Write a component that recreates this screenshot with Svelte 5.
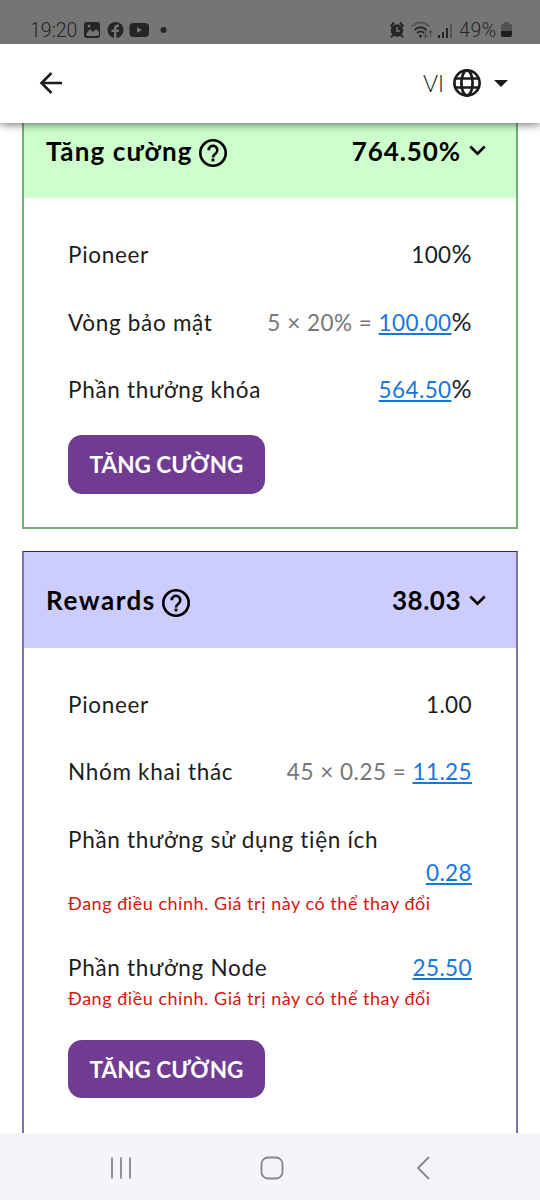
<script>
  const cards = [
    {
      kind: "boost",
      title: "Tăng cường",
      total: "764.50%",
      rows: [
        { label: "Pioneer", plain: "100", unit: "%" },
        { label: "Vòng bảo mật", formula: "5 × 20% =", link: "100.00", unit: "%" },
        { label: "Phần thưởng khóa", link: "564.50", unit: "%" },
      ],
    },
    {
      kind: "rewards",
      title: "Rewards",
      total: "38.03",
      rows: [
        { label: "Pioneer", plain: "1.00" },
        { label: "Nhóm khai thác", formula: "45 × 0.25 =", link: "11.25" },
        { label: "Phần thưởng sử dụng tiện ích", link: "0.28", wrap: true, note: true },
        { label: "Phần thưởng Node", link: "25.50", note: true },
      ],
    },
  ];
</script>

<div class="phone">
  <div class="status">
    <span class="time">19:20</span>
    <svg class="left-icons" width="84" height="18" viewBox="0 0 84 18">
      <rect x="0" y="1" width="16" height="16" rx="3" fill="#252525" />
      <path d="M2 13l4-5 3 3 3-3 3 3v3l-2 1H3z" fill="#757575" />
      <circle cx="5" cy="5" r="1.5" fill="#757575" />
      <circle cx="31.500" cy="9" r="8" fill="#252525" />
      <path d="M30 17v-6h-2.500V8.500H30V7q0-3.500 3.500-3.500h1.500V6h-1.200q-1.300 0-1.300 1.300v1.200H35l-.4 2.500h-2.100v6z" fill="#757575" />
      <rect x="45.500" y="2" width="19.500" height="14" rx="4" fill="#252525" />
      <path d="M53 6.300v5.400l5-2.700z" fill="#757575" />
      <circle cx="79.500" cy="9" r="3" fill="#252525" />
    </svg>
    <svg class="right-icons" width="66" height="18" viewBox="0 0 66 18">
      <circle cx="8" cy="9.500" r="6.200" fill="#252525" />
      <path d="M1.500 5.500l3.500-4M14.500 5.500l-3.500-4M4 14l-2 2.500M12 14l2 2.500" stroke="#252525" stroke-width="2" />
      <path d="M8 6v4h3" fill="none" stroke="#757575" stroke-width="1.600" />
      <path d="M22.500 5.500q9-8 18 0" fill="none" stroke="#555" stroke-width="1.800" />
      <path d="M25.500 9q6-5.500 12 0M28 12q3.500-3.200 7 0" fill="none" stroke="#252525" stroke-width="1.800" />
      <circle cx="31.500" cy="15" r="1.500" fill="#252525" />
      <path d="M36.500 10v6m-2-2l2 2.500 2-2.500M41.500 16v-6m-2 2l2-2.500 2 2.500" fill="none" stroke="#505050" stroke-width="1.200" />
      <path d="M50 14v3M54 11v6M58 7v10" stroke="#252525" stroke-width="2" />
      <path d="M62 3v14" stroke="#555" stroke-width="2" />
    </svg>
    <span class="percent">49%</span>
    <svg class="battery" width="11" height="16" viewBox="0 0 11 16">
      <path d="M3 2V0h5v2h1q2 0 2 2v5H0V4q0-2 2-2z" fill="#525252" />
      <path d="M0 9h11v4q0 2-2 2H2q-2 0-2-2z" fill="#1f1f1f" />
    </svg>
  </div>

  <div class="toolbar">
    <svg class="back" width="24" height="24" viewBox="0 0 24 24">
      <path d="M12.500 2L2.500 12l10 10M2.500 12H23" fill="none" stroke="#1c1c1c" stroke-width="2.600" />
    </svg>
    <span class="lang">VI</span>
    <svg class="globe" width="28" height="28" viewBox="0 0 28 28">
      <g fill="none" stroke="#1c1c1c" stroke-width="2.700">
        <circle cx="14" cy="14" r="12.600" />
        <ellipse cx="14" cy="14" rx="5.600" ry="12.600" />
        <path d="M2.500 9.500h23M2.500 18.500h23" />
      </g>
    </svg>
    <svg class="caret" width="14" height="7" viewBox="0 0 14 7"><path d="M0 0h14L7 7z" fill="#1c1c1c" /></svg>
  </div>

  <div class="content">
    {#each cards as card}
      <div class="card {card.kind}">
        <div class="card-header">
          <span class="title">{card.title}</span>
          <svg class="help" width="28" height="28" viewBox="0 0 28 28">
            <circle cx="14" cy="14" r="12.700" fill="none" stroke="#000" stroke-width="2.600" />
            <path d="M9.700 11.300a4.300 4.300 0 1 1 7.500 2.700c-1.300 1.400-3.200 2-3.200 4.500" fill="none" stroke="#000" stroke-width="2.600" />
            <rect x="12.600" y="19.600" width="2.800" height="2.800" />
          </svg>
          <span class="total">{card.total}</span>
          <svg class="chevron" width="17" height="11" viewBox="0 0 17 11">
            <path d="M1.300 1.500l7.200 7.200 7.200-7.200" fill="none" stroke="#000" stroke-width="2.600" />
          </svg>
        </div>
        <div class="card-body">
          {#each card.rows as row}
            <div class="item">
              <div class="row" class:wrap={row.wrap}>
                <span class="label">{row.label}</span>
                <span class="value">
                  {#if row.formula}<span class="formula">{row.formula}</span>{/if}
                  {#if row.link}<u>{row.link}</u>{:else}{row.plain}{/if}{#if row.unit}<span class="unit">{row.unit}</span>{/if}
                </span>
              </div>
              {#if row.note}
                <div class="note">Đang điều chỉnh. Giá trị này có thể thay đổi</div>
              {/if}
            </div>
          {/each}
          <button>TĂNG CƯỜNG</button>
        </div>
      </div>
    {/each}
  </div>

  <div class="navbar">
    <svg width="22" height="24" viewBox="0 0 22 24">
      <path d="M2 1.500v21M11 1.500v21M20 1.500v21" stroke="#85868a" stroke-width="1.800" />
    </svg>
    <svg class="home" width="24" height="24" viewBox="0 0 24 24">
      <rect x="1.500" y="1.500" width="21" height="21" rx="6.500" fill="none" stroke="#85868a" stroke-width="1.800" />
    </svg>
    <svg width="14" height="24" viewBox="0 0 14 24">
      <path d="M13 1L2 12l11 11" fill="none" stroke="#85868a" stroke-width="1.800" />
    </svg>
  </div>
</div>

<style>
  :global(body) {
    background: #fff;
  }
  .phone {
    width: 540px;
    height: 1200px;
    overflow: hidden;
    display: flex;
    flex-direction: column;
    font-family: Lato, "Open Sans", sans-serif;
    font-variant-ligatures: none;
    color: #1c1c1c;
  }
  svg {
    display: block;
    flex: none;
  }
  .status {
    height: 44px;
    flex: none;
    box-sizing: border-box;
    padding: 16px 28px 0 30px;
    background: #757575;
    display: flex;
    align-items: center;
    font-family: Roboto, sans-serif;
    font-weight: 300;
    font-size: 19.500px;
    color: #252525;
    position: relative;
    z-index: 2;
  }
  .time {
    width: 54px;
  }
  .right-icons {
    margin-left: auto;
  }
  .percent {
    margin-left: 4px;
    width: 39px;
    letter-spacing: 0.6px;
  }
  .battery {
    margin-left: 3px;
  }
  .toolbar {
    height: 79px;
    flex: none;
    box-sizing: border-box;
    padding: 0 32px 0 39px;
    display: flex;
    align-items: center;
    background: #fff;
    box-shadow: 0 1px 9px rgba(0, 0, 0, 0.6);
    position: relative;
    z-index: 1;
  }
  .lang {
    margin-left: auto;
    margin-bottom: 1px;
    font-size: 23px;
    font-weight: 300;
  }
  .globe {
    margin-left: 9px;
  }
  .toolbar svg {
    margin-bottom: 1px;
  }
  .caret {
    margin-left: 13px;
  }
  .content {
    height: 1010px;
    flex: none;
    overflow: hidden;
    padding: 0 22px;
  }
  .card {
    border: 2px solid;
    border-top-width: 1px;
    margin-bottom: 22px;
  }
  .boost {
    border-color: #74ae78;
    margin-top: -22px;
  }
  .rewards {
    border-color: #7474a8;
    border-top-color: #2a2a86;
  }
  .card-header {
    height: 96px;
    box-sizing: border-box;
    padding: 0 30px 0 22px;
    display: flex;
    align-items: center;
    font-size: 26px;
    font-weight: 700;
    color: #000;
  }
  .boost .card-header {
    background: #ccffcc;
    padding-top: 1px;
  }
  .rewards .card-header {
    background: #ccccff;
  }
  .title {
    letter-spacing: 1.150px;
  }
  .rewards .title {
    letter-spacing: 1.550px;
  }
  .help {
    margin: 5px 0 0 6px;
  }
  .total {
    margin-left: auto;
    letter-spacing: 0.900px;
  }
  .rewards .total {
    letter-spacing: 0.500px;
  }
  .chevron {
    margin-left: 8px;
  }
  .card-body {
    padding: 40.250px 44px 33.500px;
    font-size: 22.500px;
    line-height: 33.750px;
  }
  .rewards .card-body {
    padding-top: 39.500px;
    padding-bottom: 60px;
  }
  .item {
    margin-bottom: 33.750px;
  }
  .item:nth-last-child(2) {
    margin-bottom: 28px;
  }
  .row {
    display: flex;
    justify-content: space-between;
    white-space: nowrap;
  }
  .wrap {
    flex-direction: column;
  }
  .wrap .value {
    align-self: flex-end;
  }
  .label {
    letter-spacing: 0.700px;
  }
  .value {
    letter-spacing: 0.400px;
  }
  .unit {
    font-size: 25px;
    line-height: 1;
  }
  .formula {
    color: #777;
    letter-spacing: 0.500px;
  }
  u {
    color: #1677dc;
  }
  .note {
    font-size: 18px;
    line-height: 27px;
    letter-spacing: 0.530px;
    color: #d6150f;
    white-space: nowrap;
  }
  button {
    display: block;
    width: 197px;
    height: 58.500px;
    border: 0;
    border-radius: 14px;
    background: #703c91;
    color: #fff;
    font: inherit;
    font-weight: 700;
    padding: 2px 0 0;
  }
  .navbar {
    height: 67px;
    flex: none;
    box-sizing: border-box;
    padding: 2px 110px 0;
    display: flex;
    align-items: center;
    justify-content: space-between;
    background: #f4f5f9;
  }
  .home {
    margin-right: 4px;
  }
</style>
